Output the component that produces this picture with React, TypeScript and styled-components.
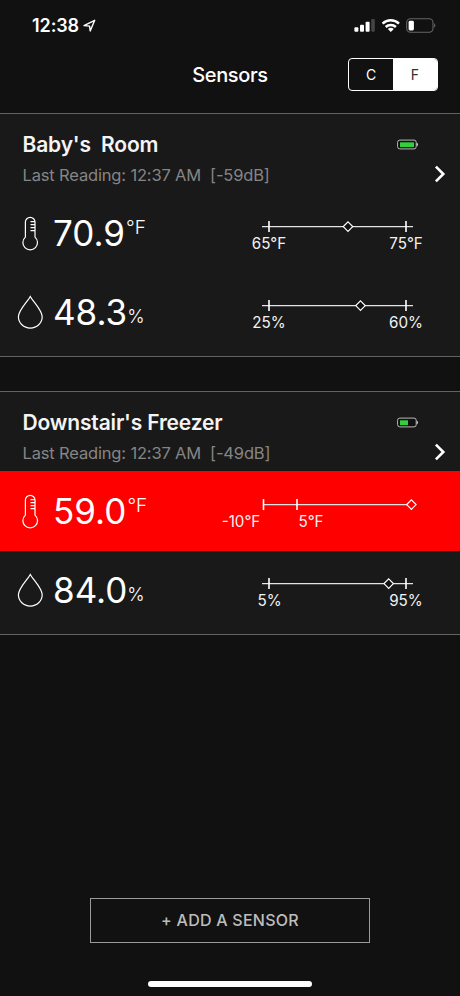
import React from "react";
import styled, { createGlobalStyle } from "styled-components";

const GlobalStyle = createGlobalStyle`
  * { box-sizing: border-box; }
  body { margin: 0; background: #111111; }
`;

const Screen = styled.div`
  display: flex;
  flex-direction: column;
  width: 460px;
  height: 996px;
  overflow: hidden;
  background: #111111;
  color: #ffffff;
  font-family: Inter, "Liberation Sans", sans-serif;
`;

const StatusBar = styled.div`
  display: flex;
  justify-content: space-between;
  height: 50px;
  padding: 14px 24px 0 32px;
`;

const Clock = styled.div`
  display: flex;
  align-items: center;
  gap: 4px;
  height: 23px;
  font-size: 18px;
  font-weight: 600;
  letter-spacing: -0.1px;
`;

const StatusIcons = styled.svg`
  display: block;
  width: 82px;
  height: 24px;
`;

const NavBar = styled.header`
  display: grid;
  grid-template-columns: 1fr auto 1fr;
  align-items: center;
  height: 48px;
  padding: 0 22px;
`;

const Title = styled.h1`
  grid-column: 2;
  margin: 0;
  padding-top: 1px;
  font-size: 20px;
  font-weight: 500;
  line-height: 48px;
  letter-spacing: -0.35px;
`;

const UnitToggle = styled.div`
  display: flex;
  justify-self: end;
  width: 90px;
  height: 33px;
  overflow: hidden;
  border: 1px solid #ffffff;
  border-radius: 4px;
`;

const UnitOption = styled.button<{ $active?: boolean }>`
  flex: 1;
  padding: 0;
  border: 0;
  background: ${(p) => (p.$active ? "#ffffff" : "transparent")};
  color: ${(p) => (p.$active ? "#333333" : "#ffffff")};
  font: 400 14px Inter, sans-serif;
`;

const SensorList = styled.main`
  display: flex;
  flex-direction: column;
  gap: 34px;
  padding-top: 15px;
`;

const Card = styled.section`
  height: 244px;
  border: solid #626262;
  border-width: 1px 0;
  background: #191919;
`;

const CardHeader = styled.div`
  display: grid;
  grid-template-columns: 1fr 27px 21px;
  height: 79px;
  padding: 18px 15px 0 22.5px;
`;

const SensorName = styled.h2`
  margin: 0;
  font-size: 21px;
  font-weight: 600;
  line-height: 26px;
  letter-spacing: -0.16px;
  white-space: pre;
  color: #f4f4f4;
`;

const LastReading = styled.p`
  margin: 4px 0 0;
  font-size: 16.5px;
  line-height: 26px;
  letter-spacing: -0.16px;
  white-space: pre;
  color: #858585;
`;

const BatteryIcon = styled.svg`
  display: block;
  width: 22px;
  height: 12px;
  margin-top: 7px;
`;

const Chevron = styled.svg`
  display: block;
  width: 14px;
  height: 20px;
  margin: 32px 0 0 9px;
`;

const MetricRow = styled.div<{ $alert?: boolean }>`
  display: flex;
  justify-content: space-between;
  height: ${(p) => (p.$alert ? 80 : 79)}px;
  margin-bottom: ${(p) => (p.$alert ? -1 : 0)}px;
  padding: 0 20px 0 17px;
  background: ${(p) => (p.$alert ? "#ff0000" : "transparent")};
`;

const Reading = styled.div`
  display: flex;
  align-items: flex-start;
  padding-top: 17px;
`;

const MetricIcon = styled.svg`
  display: block;
  width: 28px;
  height: 46px;
  margin-right: 8px;
`;

const Value = styled.span`
  font-size: 35px;
  font-weight: 400;
  line-height: 46px;
`;

const Unit = styled.span<{ $raised?: boolean }>`
  margin-left: ${(p) => (p.$raised ? 1 : 0)}px;
  font-size: ${(p) => (p.$raised ? 19 : 18.5)}px;
  font-weight: 300;
  line-height: ${(p) => (p.$raised ? 36 : 55)}px;
`;

const RangeChart = styled.svg`
  display: block;
  width: 220px;
  height: 79px;

  text {
    fill: #f2f2f2;
    font-family: Inter, sans-serif;
    font-size: 15.2px;
    text-anchor: middle;
  }
`;

const Footer = styled.footer`
  display: flex;
  flex-direction: column;
  align-items: center;
  justify-content: space-between;
  height: 89px;
  margin-top: auto;
  margin-bottom: 9px;
`;

const AddButton = styled.button`
  width: 280px;
  height: 45px;
  padding: 0 0 2px;
  border: 1px solid #9a9a9a;
  background: transparent;
  color: #bdbdbd;
  font: 500 16px Inter, sans-serif;
  letter-spacing: 0.25px;
`;

const HomeIndicator = styled.div`
  width: 164px;
  height: 6px;
  border-radius: 3px;
  background: #ffffff;
`;

type Point = { x: number; label: string; labelX: number };
type Metric = {
  kind: "temperature" | "humidity";
  value: string;
  alert?: boolean;
  line: [number, number];
  points: Point[];
  marker: number;
};
type Sensor = { name: string; reading: string; charge: number; metrics: Metric[] };

const sensors: Sensor[] = [
  {
    name: "Baby's  Room",
    reading: "Last Reading: 12:37 AM  [-59dB]",
    charge: 14,
    metrics: [
      {
        kind: "temperature",
        value: "70.9",
        line: [42, 193],
        points: [
          { x: 49, label: "65°F", labelX: 49 },
          { x: 186, label: "75°F", labelX: 186 },
        ],
        marker: 128,
      },
      {
        kind: "humidity",
        value: "48.3",
        line: [42, 193],
        points: [
          { x: 49, label: "25%", labelX: 49 },
          { x: 186, label: "60%", labelX: 186 },
        ],
        marker: 140.5,
      },
    ],
  },
  {
    name: "Downstair's Freezer",
    reading: "Last Reading: 12:37 AM  [-49dB]",
    charge: 8,
    metrics: [
      {
        kind: "temperature",
        value: "59.0",
        alert: true,
        line: [43, 191],
        points: [
          { x: 43.5, label: "-10°F", labelX: 21 },
          { x: 77, label: "5°F", labelX: 91 },
        ],
        marker: 191.4,
      },
      {
        kind: "humidity",
        value: "84.0",
        line: [42, 193],
        points: [
          { x: 49, label: "5%", labelX: 49.5 },
          { x: 186, label: "95%", labelX: 186 },
        ],
        marker: 168.7,
      },
    ],
  },
];

const Thermometer = () => (
  <MetricIcon viewBox="0 0 28 46" fill="none" stroke="#fff" strokeWidth="1.2">
    <path d="M8.4 27.1V12.1a4.8 4.8 0 0 1 9.6 0v15a7.3 7.3 0 1 1-9.6 0z" />
    <path d="M13.5 11.7H18M13.5 14.7H18M13.5 17.7H18M13.5 20.7H18" strokeWidth="1.3" />
  </MetricIcon>
);

const Drop = () => (
  <MetricIcon viewBox="0 0 28 46" fill="none" stroke="#fff" strokeWidth="1.2">
    <path d="M13.3 7.5C10.5 12.8 1.4 21.3 1.4 27.8a11.9 11.3 0 0 0 23.8 0C25.2 21.3 16.1 12.8 13.3 7.5z" />
  </MetricIcon>
);

const Range = ({ line, points, marker, alert }: Metric) => (
  <RangeChart viewBox="0 0 220 79">
    <path d={`M${line[0]} 33.6H${line[1]}`} stroke="#e4e4e4" strokeWidth="1.4" />
    {points.map((p) => (
      <React.Fragment key={p.label}>
        <path d={`M${p.x} 28.1v11`} stroke="#fff" strokeWidth="1.6" />
        <text x={p.labelX} y="56.4">{p.label}</text>
      </React.Fragment>
    ))}
    <path
      d={`M${marker} 28.9l4.7 4.7-4.7 4.7-4.7-4.7z`}
      fill={alert ? "#ff0000" : "#111"}
      stroke="#fff"
      strokeWidth="1.2"
    />
  </RangeChart>
);

export default function App() {
  return (
    <Screen>
      <GlobalStyle />
      <StatusBar>
        <Clock>
          12:38
          <svg width="13" height="14" viewBox="0 0 13 14" fill="none">
            <path d="M1 6.6 11.7 1.3 7.2 12 6.6 7.1z" stroke="#fff" strokeWidth="1.4" strokeLinejoin="round" />
          </svg>
        </Clock>
        <StatusIcons viewBox="0 0 82 24">
          <g fill="#fff">
            <rect x="0.4" y="13.2" width="4" height="4.6" rx="1" />
            <rect x="6" y="10.8" width="4" height="7" rx="1" />
            <rect x="11.6" y="7.7" width="4" height="10.1" rx="1" />
            <rect x="17.2" y="5" width="3.6" height="12.8" rx="1" fill="#444" />
            <rect x="54.6" y="6.8" width="5.3" height="9.6" rx="1.4" />
          </g>
          <g fill="none" stroke="#fff" strokeWidth="2.5">
            <path d="M28.6 9.6a12 12 0 0 1 16.4 0" />
            <path d="M31.7 13a7.4 7.4 0 0 1 10.2 0" />
          </g>
          <path d="M33.8 15a4.5 4.5 0 0 1 6 0l-3 3.1z" fill="#fff" />
          <rect x="52.7" y="4.8" width="26.3" height="13.4" rx="3.7" fill="none" stroke="#666" strokeWidth="1.1" />
          <path d="M80.2 9.2q2.4 2.3 0 4.6z" fill="#666" />
        </StatusIcons>
      </StatusBar>
      <NavBar>
        <Title>Sensors</Title>
        <UnitToggle>
          <UnitOption>C</UnitOption>
          <UnitOption $active>F</UnitOption>
        </UnitToggle>
      </NavBar>
      <SensorList>
        {sensors.map((s) => (
          <Card key={s.name}>
            <CardHeader>
              <div>
                <SensorName>{s.name}</SensorName>
                <LastReading>{s.reading}</LastReading>
              </div>
              <BatteryIcon viewBox="0 0 22 12">
                <rect x="0.6" y="1.1" width="18.6" height="8.8" rx="2.2" fill="#111" stroke="#bbb" />
                <rect x="3" y="3.3" width={s.charge} height="4.8" fill="#30d13c" />
                <path d="M19.8 3.5q2 2 0 4z" fill="#fff" />
              </BatteryIcon>
              <Chevron viewBox="0 0 14 20" fill="none">
                <path d="M2.9 2.6 10.3 10l-7.4 7.4" stroke="#fff" strokeWidth="2.6" />
              </Chevron>
            </CardHeader>
            {s.metrics.map((m) => (
              <MetricRow key={m.kind} $alert={m.alert}>
                <Reading>
                  {m.kind === "temperature" ? <Thermometer /> : <Drop />}
                  <Value>{m.value}</Value>
                  <Unit $raised={m.kind === "temperature"}>
                    {m.kind === "temperature" ? "°F" : "%"}
                  </Unit>
                </Reading>
                <Range {...m} />
              </MetricRow>
            ))}
          </Card>
        ))}
      </SensorList>
      <Footer>
        <AddButton>+ ADD A SENSOR</AddButton>
        <HomeIndicator />
      </Footer>
    </Screen>
  );
}
